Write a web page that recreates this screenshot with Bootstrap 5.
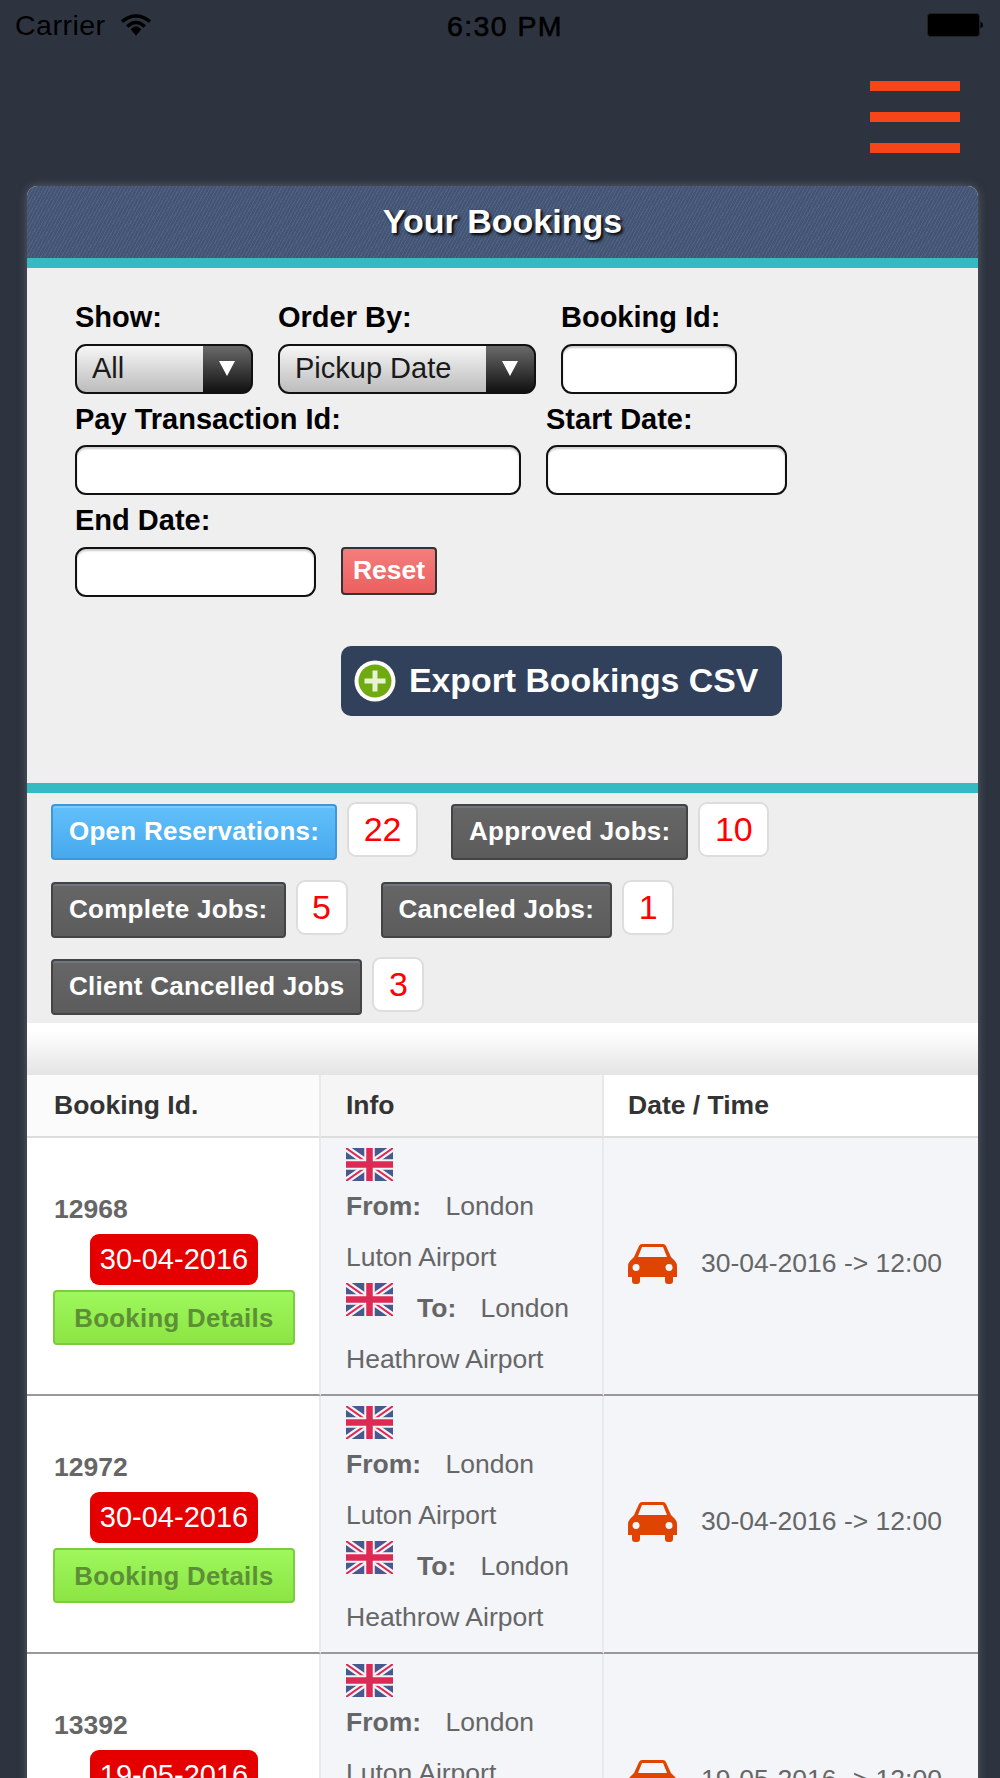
<!DOCTYPE html>
<html lang="en">
<head>
<meta charset="UTF-8">
<meta name="viewport" content="width=device-width, initial-scale=1">
<title>Your Bookings</title>
<link href="https://cdn.jsdelivr.net/npm/bootstrap@5.3.0/dist/css/bootstrap.min.css" rel="stylesheet">
<style>
html, body { height: 100%; overflow: hidden; }
body { font-family: "Liberation Sans", Arial, sans-serif; background-color: #2d3440; }
.app-frame { height: 1778px; overflow: hidden; }

.status-bar { height: 50px; padding: 0 17px 0 15px; color: #000; font-size: 28.5px; position: relative; }
.status-time { flex: 1; text-align: center; font-weight: 500; letter-spacing: 1.4px; padding: 2px 68px 0 0; -webkit-text-stroke: .6px #000; }
.carrier { width: 106px; letter-spacing: .5px; }
.top-nav { height: 136px; padding: 31px 40px 0 0; }
.burger { width: 90px; }
.burger span { display: block; height: 10px; background: #f64518; margin-bottom: 21px; }

.booking-card { margin: 0 22px 0 27px; border: 0; border-radius: 10px 10px 0 0; background: #fff; box-shadow: 0 0 9px rgba(130,130,130,.55); overflow: hidden; }
.booking-head { height: 72px; line-height: 70px; text-align: center; color: #fff; font-size: 34px; font-weight: 700;
  text-shadow: 2px 2px 3px #000;
  background-color: #47597a;
  background-image: repeating-linear-gradient(118deg, rgba(255,255,255,.05) 0 1px, rgba(0,0,0,.05) 1px 3px); }
.teal-rule { height: 10px; background: #34bac3; }

.filter-panel { height: 515px; background: #efefef; padding: 24px 48px 0; }
.filter-line { display: flex; gap: 25px; }
.filter-label { display: block; margin: 0; height: 51.5px; line-height: 50px; font-size: 29px; font-weight: 700; color: #000; }
.pick, .field { display: block; height: 50px; border: 2px solid #111; border-radius: 11px; padding: 0; box-shadow: none; }
.field { background: #fff; box-shadow: inset 0 2px 2px #ccc; }
.pick { font-size: 29px; color: #1a1a1a; padding-left: 15px; appearance: none; background-color: #ddd;
  background-image: url("data:image/svg+xml,%3Csvg xmlns='http://www.w3.org/2000/svg' width='16' height='15'%3E%3Cpath d='M0 0h16L8 15z' fill='%23fff'/%3E%3C/svg%3E"), linear-gradient(#6a6a6a, #111), linear-gradient(#f6f6f6, #bcbcbc);
  background-repeat: no-repeat;
  background-size: 16px 15px, 48px 100%, 100% 100%;
  background-position: right 16px center, right center, left top; }
.w-show { width: 178px; }
.w-order { width: 258px; }
.w-id { width: 176px; }
.w-pay { width: 446px; }
.w-start { width: 241px; }
.w-end { width: 241px; }
.reset-btn { width: 96px; height: 48px; align-self: flex-end; margin-bottom: 2px; padding: 0; font-size: 26.5px; font-weight: 700; color: #fff; line-height: 37px;
  border: 2px solid #333; border-radius: 4px; background: linear-gradient(#f57d7d, #ec5f5f); }
.export-btn { margin: 49px 0 0 266px; width: 441px; height: 70px; padding: 0 0 0 13px; gap: 13px; background: #31405b; color: #fff; border: 0; border-radius: 10px; font-size: 33.8px; font-weight: 700; }

.stats-panel { background: #eee; height: 230px; padding: 9px 20px 0 24px; display: flex; flex-wrap: wrap; align-content: flex-start; row-gap: 19.500px; }
.stat-group { display: flex; gap: 10px; margin-right: 33px; align-items: flex-start; }
.stat-btn { height: 56px; margin-top: 2px; padding: 0 16px; font-size: 26px; font-weight: 700; color: #fff; border: 2px solid #444; border-radius: 4px; line-height: 50px;
  background: linear-gradient(#666 0, #5c5c5c 100%); box-shadow: inset 0 2px 0 #6f7680; letter-spacing: .25px; }
.stat-btn.is-open { background: linear-gradient(#62c0fb, #47a9ec); border-color: #3f97d9; box-shadow: inset 0 2px 0 #7dcbfb; }
.stat-num { height: 55px; min-width: 52px; padding: 0 14.500px; background: #fff; border: 2px solid #ddd; border-radius: 9px; color: #f00; font-size: 34px; line-height: 51px; text-align: center; }

.fade-gap { height: 52px; background: linear-gradient(#fff 15%, #e4e4e4); }

.booking-table { margin: 0; table-layout: fixed; width: 951px; border-collapse: separate; border-spacing: 0; color: #666; font-size: 26.5px; }
.booking-table th, .booking-table td { padding: 0 0 0 25px; border-bottom: 2px solid #999; border-right: 2px solid #e9e9e9; box-shadow: none; }
.booking-table th:last-child, .booking-table td:last-child { border-right: 0; }
.booking-table thead th { height: 63px; vertical-align: middle; font-weight: 700; color: #333; border-bottom-color: #ddd; }
.booking-table thead th:nth-child(1) { background: #fbfbfb; padding-left: 27px; }
.booking-table thead th:nth-child(2) { background: #f5f5f5; }
.booking-table thead th:nth-child(3) { background: #fff; padding-left: 24px; }
.booking-table td { height: 258px; background: #f3f5f9; vertical-align: top; }
.booking-table td.cell-id { background: #fff; padding: 0 24px 0 27px; vertical-align: middle; }
.booking-table td.cell-when { vertical-align: middle; padding: 0 0 4px 24px; }
.booking-no { font-weight: 700; line-height: 50px; margin-top: -3px; }
.date-tag { display: inline-block; height: 51px; width: 168px; margin-left: -1px; background: #e50000; color: #fff; border-radius: 9px; font-size: 29px; line-height: 50px; text-align: center; }
.detail-btn { display: block; width: 242px; height: 55px; margin: 5px 0 0 -1px; padding: 0; background: linear-gradient(#9ef85c, #8ce544); border: 2px solid #7ccb42; border-radius: 4px; color: #5d8f36; font-size: 25.8px; font-weight: 700; line-height: 48px; letter-spacing: .3px; }
.route { line-height: 51px; padding-top: 10px; width: 235px; }
.route b { margin-right: 17px; }
.flag { display: block; width: 47px; height: 33px; margin-bottom: 0; }
.flag-inline { display: inline-block; vertical-align: top; margin: 0 24px 0 0; }
.when-line { display: flex; align-items: center; gap: 24px; white-space: nowrap; }
</style>
</head>
<body>
<svg width="0" height="0" class="d-block">
  <defs>
    <symbol id="uk-flag" viewBox="0 0 47 33">
      <rect width="47" height="33" rx="1.5" fill="#47598f"/>
      <path d="M0 0L47 33M47 0L0 33" stroke="#f4f4f6" stroke-width="6.5"/>
      <path d="M0 0L47 33M47 0L0 33" stroke="#dc2a55" stroke-width="2"/>
      <path d="M23.5 0V33M0 16.500H47" stroke="#f4f4f6" stroke-width="10.500"/>
      <path d="M23.500 0V33M0 16.500H47" stroke="#dc2a55" stroke-width="6.500"/>
    </symbol>
    <symbol id="car" viewBox="0 0 49 40">
      <path fill-rule="evenodd" fill="#e04403" d="M11 2Q12 0 14 0H35Q37 0 38 2L43 13L47 17Q49 19 49 23V33H45V37Q45 40 42 40H40Q37 40 37 37V33H12V37Q12 40 9 40H7Q4 40 4 37V33H0V23Q0 19 2 17L6 13ZM14 3L10 13H39L35 3ZM8 20A3.500 3.500 0 1 0 8.100 27A3.500 3.500 0 1 0 8 20ZM41 20A3.500 3.500 0 1 0 41.100 27A3.500 3.500 0 1 0 41 20Z"/>
    </symbol>
  </defs>
</svg>

<div class="app-frame">
  <div class="status-bar d-flex align-items-center">
    <span class="carrier">Carrier</span>
    <svg width="30" height="22" viewBox="0 0 31 22" class="me-auto">
      <path d="M1 7.500Q15.500 -4 30 7.500" fill="none" stroke="#000" stroke-width="3.500"/>
      <path d="M6.500 12.500Q15.500 4.500 24.500 12.500" fill="none" stroke="#000" stroke-width="3.500"/>
      <path d="M10 15.500Q15.500 9 21 15.500L15.500 22Z" fill="#000"/>
    </svg>
    <span class="status-time">6:30 PM</span>
    <svg width="56" height="24" viewBox="0 0 56 24">
      <rect x="0.500" y="0.500" width="52" height="23" rx="3" fill="#000" stroke="#222"/>
      <path d="M53.500 8.500Q56 9.500 56 12T53.500 15.500Z" fill="#000"/>
    </svg>
  </div>

  <div class="top-nav d-flex justify-content-end">
    <div class="burger"><span></span><span></span><span></span></div>
  </div>

  <div class="card booking-card">
    <div class="booking-head">Your Bookings</div>
    <div class="teal-rule"></div>

    <div class="filter-panel">
      <div class="filter-line">
        <div class="w-show">
          <label class="filter-label">Show:</label>
          <select class="form-select pick w-100"><option>All</option></select>
        </div>
        <div class="w-order">
          <label class="filter-label">Order By:</label>
          <select class="form-select pick w-100"><option>Pickup Date</option></select>
        </div>
        <div class="w-id">
          <label class="filter-label">Booking Id:</label>
          <input type="text" class="form-control field w-100">
        </div>
      </div>
      <div class="filter-line">
        <div class="w-pay">
          <label class="filter-label">Pay Transaction Id:</label>
          <input type="text" class="form-control field w-100">
        </div>
        <div class="w-start">
          <label class="filter-label">Start Date:</label>
          <input type="text" class="form-control field w-100">
        </div>
      </div>
      <div class="filter-line">
        <div class="w-end">
          <label class="filter-label">End Date:</label>
          <input type="text" class="form-control field w-100">
        </div>
        <button type="button" class="btn reset-btn">Reset</button>
      </div>
      <button type="button" class="btn export-btn d-flex align-items-center">
        <svg width="42" height="42" viewBox="0 0 42 42">
          <circle cx="21" cy="21" r="20.500" fill="#fff"/>
          <circle cx="21" cy="21" r="16.500" fill="#6eaa10"/>
          <path d="M21 10.500V31.500M10.500 21H31.500" stroke="#e8f3d6" stroke-width="5"/>
        </svg>
        <span>Export Bookings CSV</span>
      </button>
    </div>
    <div class="teal-rule"></div>

    <div class="stats-panel">
      <div class="stat-group"><span class="stat-btn is-open">Open Reservations:</span><span class="stat-num">22</span></div>
      <div class="stat-group"><span class="stat-btn">Approved Jobs:</span><span class="stat-num">10</span></div>
      <div class="stat-group"><span class="stat-btn">Complete Jobs:</span><span class="stat-num">5</span></div>
      <div class="stat-group"><span class="stat-btn">Canceled Jobs:</span><span class="stat-num">1</span></div>
      <div class="stat-group"><span class="stat-btn">Client Cancelled Jobs</span><span class="stat-num">3</span></div>
    </div>
    <div class="fade-gap"></div>

    <table class="table booking-table">
      <colgroup><col style="width:294px"><col style="width:283px"><col style="width:374px"></colgroup>
      <thead>
        <tr><th>Booking Id.</th><th>Info</th><th>Date / Time</th></tr>
      </thead>
      <tbody id="rows"></tbody>
    </table>
  </div>
</div>

<script src="https://cdn.jsdelivr.net/npm/bootstrap@5.3.0/dist/js/bootstrap.bundle.min.js"></script>
<script>
const bookings = [
  { id: "12968", date: "30-04-2016" },
  { id: "12972", date: "30-04-2016" },
  { id: "13392", date: "19-05-2016" }
];
const flag = cls => `<svg class="flag ${cls}"><use href="#uk-flag"/></svg>`;
document.getElementById("rows").innerHTML = bookings.map(b => `
  <tr>
    <td class="cell-id">
      <div class="booking-no">${b.id}</div>
      <div class="text-center"><span class="date-tag">${b.date}</span></div>
      <button type="button" class="btn detail-btn">Booking Details</button>
    </td>
    <td>
      <div class="route">
        ${flag("")}
        <b>From:</b> London Luton Airport<br>
        ${flag("flag-inline")}<b>To:</b> London Heathrow Airport
      </div>
    </td>
    <td class="cell-when">
      <div class="when-line">
        <svg width="49" height="40"><use href="#car"/></svg>
        <span>${b.date} -&gt; 12:00</span>
      </div>
    </td>
  </tr>`).join("");
</script>
</body>
</html>
